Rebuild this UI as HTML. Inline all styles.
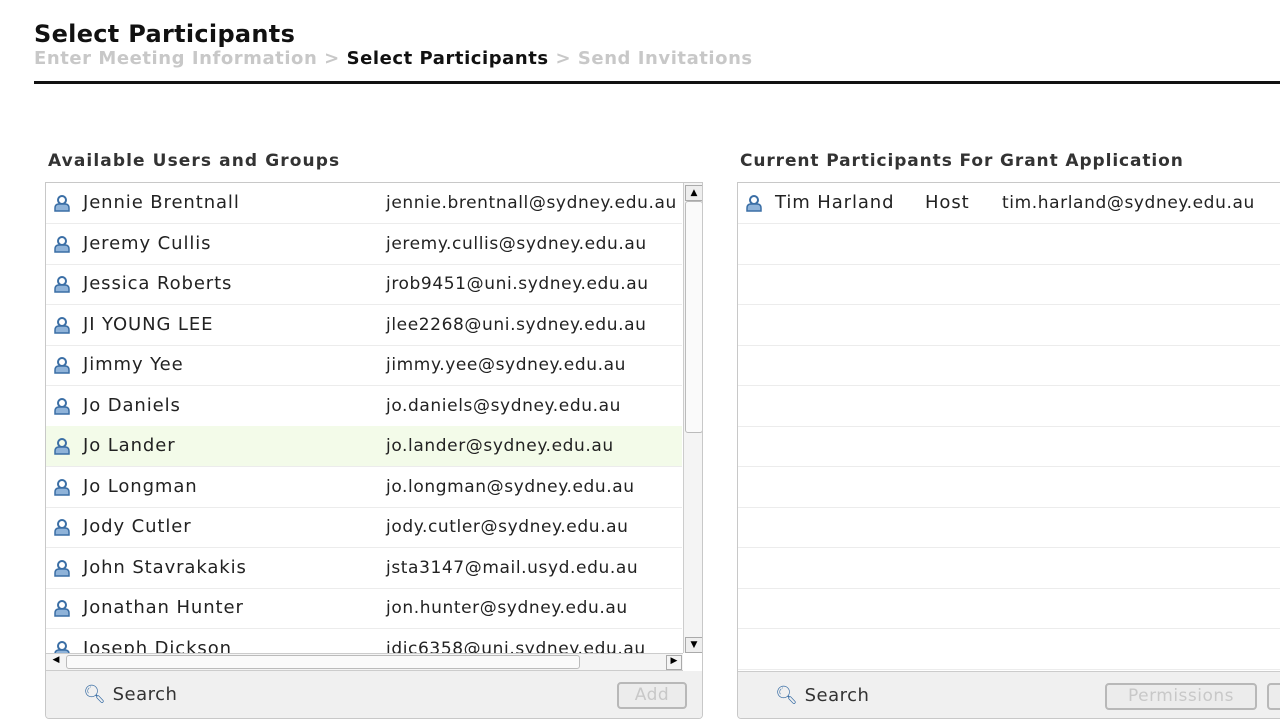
<!DOCTYPE html><html><head><style>
body{margin:0;width:1280px;height:720px;overflow:hidden;background:#fff;font-family:"DejaVu Sans","Liberation Sans",sans-serif;position:relative}
.a{position:absolute;white-space:nowrap}
.row{position:absolute;left:0;height:40px;border-bottom:1px solid #ececec;width:100%}
.row span{position:absolute;top:10px;font-size:17px;color:#222;letter-spacing:0.6px}
.row span.n{font-size:18px;letter-spacing:0.9px;top:9px}
.ic{position:absolute;left:8px;top:12px}
.btn{position:absolute;border:2px solid #b8b8b8;border-radius:4px;background:#ececec;color:#c8c8c8;font-size:17px;text-align:center;line-height:23px;height:23px;letter-spacing:0.5px}
.s{font-size:18px;letter-spacing:0.5px}
</style></head><body>
<div class="a" style="left:34px;top:20px;font-size:24px;font-weight:bold;color:#111;letter-spacing:0.3px">Select Participants</div>
<div class="a" style="left:34px;top:48px;font-size:18px;font-weight:bold;color:#c8c8c8;letter-spacing:0.55px">Enter Meeting Information &gt; <span style="color:#111">Select Participants</span> &gt; Send Invitations</div>
<div class="a" style="left:34px;top:81px;width:1246px;height:3px;background:#111"></div>
<div class="a" style="left:48px;top:151px;font-size:17px;font-weight:bold;color:#333;letter-spacing:1.1px">Available Users and Groups</div>
<div class="a" style="left:740px;top:151px;font-size:17px;font-weight:bold;color:#333;letter-spacing:0.9px">Current Participants For Grant Application</div>

<div class="a" style="left:45px;top:182px;width:656px;height:535px;border:1px solid #c8c8c8;border-radius:0 0 4px 4px;overflow:hidden">
 <div class="a" style="left:0;top:0;width:636px;height:470px;overflow:hidden">
  <svg width="0" height="0" style="position:absolute"><defs><g id="u"><circle cx="8" cy="5" r="4" fill="none" stroke="#3a6ea5" stroke-width="2"/><path d="M1 16v-3q0-4 4-4h6q4 0 4 4v3z" fill="#8fb3d9" stroke="#3a6ea5" stroke-width="1.5"/></g></defs></svg>
  <div id="L"></div>
 </div>
 <div class="a" style="left:637px;top:0;width:19px;height:470px;background:#f4f4f4;border-left:1px solid #ccc">
  <div class="a" style="left:1px;top:2px;width:16px;height:14px;border:1px solid #aaa;background:#eee;font-size:9px;text-align:center;line-height:14px">▲</div>
  <div class="a" style="left:1px;top:18px;width:16px;height:230px;border:1px solid #bbb;border-radius:3px;background:#fafafa"></div>
  <div class="a" style="left:1px;top:454px;width:16px;height:14px;border:1px solid #aaa;background:#eee;font-size:9px;text-align:center;line-height:14px">▼</div>
 </div>
 <div class="a" style="left:0;top:470px;width:637px;height:16px;background:#f4f4f4;border-top:1px solid #ccc;border-bottom:1px solid #ccc">
  <div class="a" style="left:3px;top:1px;width:14px;height:13px;font-size:9px;text-align:center">◀</div>
  <div class="a" style="left:20px;top:1px;width:512px;height:12px;border:1px solid #bbb;border-radius:3px;background:#fafafa"></div>
  <div class="a" style="left:620px;top:1px;width:14px;height:13px;font-size:9px;text-align:center;border:1px solid #aaa">▶</div>
 </div>
 <div class="a" style="left:0;top:488px;width:656px;height:50px;background:#f0f0f0">
  <div class="a s" style="left:37px;top:13px;color:#333"><span style="color:#3a6ea5">🔍︎</span> Search</div>
  <div class="btn" style="left:571px;top:11px;width:66px">Add</div>
 </div>
</div>

<div class="a" style="left:737px;top:182px;width:560px;height:535px;border:1px solid #c8c8c8;border-radius:0 0 4px 4px;overflow:hidden">
 <div id="R"></div>
 <div class="a" style="left:0;top:488px;width:560px;height:50px;background:#f0f0f0;border-top:1px solid #ccc">
  <div class="a s" style="left:37px;top:13px;color:#333"><span style="color:#3a6ea5">🔍︎</span> Search</div>
  <div class="btn" style="left:367px;top:11px;width:148px">Permissions</div>
  <div class="btn" style="left:529px;top:11px;width:40px"></div>
 </div>
</div>
<script>
var d=[["Jennie Brentnall","jennie.brentnall@sydney.edu.au"],["Jeremy Cullis","jeremy.cullis@sydney.edu.au"],["Jessica Roberts","jrob9451@uni.sydney.edu.au"],["JI YOUNG LEE","jlee2268@uni.sydney.edu.au"],["Jimmy Yee","jimmy.yee@sydney.edu.au"],["Jo Daniels","jo.daniels@sydney.edu.au"],["Jo Lander","jo.lander@sydney.edu.au"],["Jo Longman","jo.longman@sydney.edu.au"],["Jody Cutler","jody.cutler@sydney.edu.au"],["John Stavrakakis","jsta3147@mail.usyd.edu.au"],["Jonathan Hunter","jon.hunter@sydney.edu.au"],["Joseph Dickson","jdic6358@uni.sydney.edu.au"]];
var h="";d.forEach(function(r,i){h+='<div class="row" style="top:'+(i*40.5)+'px;'+(i==6?'background:#f3fbe9':'')+'"><svg class="ic" width="17" height="17"><use href="#u"/></svg><span class="n" style="left:37px">'+r[0]+'</span><span style="left:340px">'+r[1]+'</span></div>'});
document.getElementById("L").innerHTML=h;
h='<div class="row" style="top:0"><svg class="ic" width="17" height="17"><use href="#u"/></svg><span class="n" style="left:37px">Tim Harland</span><span class="n" style="left:187px">Host</span><span style="left:264px">tim.harland@sydney.edu.au</span></div>';
for(var i=1;i<12;i++)h+='<div class="row" style="top:'+(i*40.5)+'px"></div>';
document.getElementById("R").innerHTML=h;
</script>
</body></html>
